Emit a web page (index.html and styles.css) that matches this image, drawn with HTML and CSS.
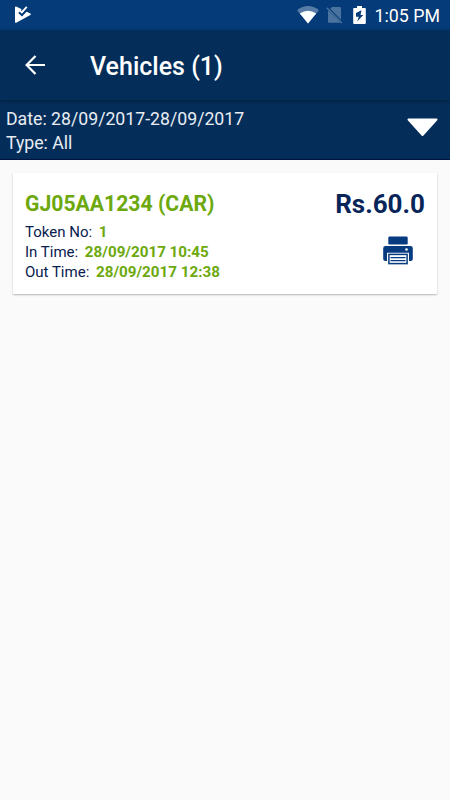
FILE: index.html
```html
<!DOCTYPE html>
<html lang="en">
<head>
    <meta charset="UTF-8">
    <meta name="viewport" content="width=device-width, initial-scale=1.0">
    <title>Vehicles</title>
    <link rel="stylesheet" href="styles.css">
</head>
<body>
    <div class="status-bar">
        <svg class="play-icon" width="17" height="17" viewBox="0 0 17 17">
            <path d="M1.8 1.2 L16 8.2 L1.8 16 Z" fill="#fff" stroke="#fff" stroke-width="1.6" stroke-linejoin="round"/>
            <path d="M5 6.2 L8 9 L14 2.4" fill="none" stroke="#043b78" stroke-width="2.2"/>
            <path d="M7.6 4.9 L10.5 1.5" fill="none" stroke="#043b78" stroke-width="2"/>
            <path d="M7.2 6.8 L12.8 0.9" fill="none" stroke="#fff" stroke-width="1.8"/>
        </svg>
        <div class="status-icons">
            <svg class="wifi-icon" width="22" height="18" viewBox="0 0 22 18">
                <path d="M0 4.2 Q11 -4 22 4.2 L11 17.6 Z" fill="#567ca6"/>
                <path d="M2.8 7.6 Q11 2 19.2 7.6 L11 17.6 Z" fill="#fff"/>
            </svg>
            <svg class="sim-icon" width="17" height="18" viewBox="0 0 17 18">
                <path d="M6 1 H14 Q15 1 15 2 V13.8 L4.2 2.8 Z" fill="#4b739f"/>
                <path d="M2 4.2 L14.5 16.7 H3 Q2 16.7 2 15.7 Z" fill="#4b739f"/>
                <path d="M0.8 1.8 L15.8 17" stroke="#4b739f" stroke-width="1.4"/>
            </svg>
            <svg class="battery-icon" width="13" height="18" viewBox="0 0 13 18">
                <path d="M4 0 H9 V2 H12 Q12.8 2 12.8 3 V17 Q12.8 18 12 18 H1 Q0.2 18 0.2 17 V3 Q0.2 2 1 2 H4 Z" fill="#fff"/>
                <path d="M8.5 4.3 L3 7 V10.8 H5.8 L4.2 15.5 L10.3 9 H7.5 Z" fill="#043b78"/>
            </svg>
            <span class="clock">1:05 PM</span>
        </div>
    </div>

    <div class="toolbar">
        <svg class="back-icon" width="20" height="20" viewBox="0 0 20 20">
            <path d="M20 10 H2 M10.5 0.9 L1.6 10 L10.5 19.1" fill="none" stroke="#fff" stroke-width="2.2"/>
        </svg>
        <h1>Vehicles (1)</h1>
    </div>

    <div class="filter-bar">
        <div class="filter-text">
            <p>Date: 28/09/2017-28/09/2017</p>
            <p>Type: All</p>
        </div>
        <svg class="dropdown-icon" width="32" height="19" viewBox="0 0 32 19">
            <path d="M2.5 1.5 H30.5 L16.5 17 Z" fill="#fff" stroke="#fff" stroke-width="2" stroke-linejoin="round"/>
        </svg>
    </div>

    <div class="vehicle-card">
        <div class="vehicle-info">
            <h2>GJ05AA1234 (CAR)</h2>
            <p>Token No: <b>1</b></p>
            <p>In Time: <b>28/09/2017 10:45</b></p>
            <p>Out Time: <b>28/09/2017 12:38</b></p>
        </div>
        <div class="vehicle-side">
            <span class="amount">Rs.60.0</span>
            <svg class="print-icon" width="30" height="29" viewBox="0 0 30 29">
                <rect x="5.3" y="0.5" width="19.4" height="8" rx="1.3" fill="#063b80"/>
                <path d="M2.5 10 H27.5 Q29.8 10 29.8 12.3 V23 Q29.8 25 27.5 25 H26 V16.8 H4 V25 H2.5 Q0.2 25 0.2 23 V12.3 Q0.2 10 2.5 10 Z" fill="#063b80"/>
                <circle cx="23.5" cy="13.5" r="1.3" fill="#fff"/>
                <rect x="5.9" y="18.4" width="18.2" height="9.2" fill="#fff" stroke="#063b80" stroke-width="1.5"/>
                <path d="M7.5 21.6 H22.5 M7.5 24.6 H22.5" stroke="#063b80" stroke-width="1.1"/>
            </svg>
        </div>
    </div>
</body>
</html>
```

FILE: styles.css
```css
* {
    margin: 0;
    padding: 0;
    box-sizing: border-box;
}

body {
    font-family: Roboto, "Liberation Sans", sans-serif;
    background: #fafafa;
    min-height: 100vh;
}

.status-bar {
    display: flex;
    justify-content: space-between;
    height: 30px;
    padding: 6px 10px 0 14px;
    background: #043b78;
    color: #fff;
}

.status-icons {
    display: flex;
}

.sim-icon {
    margin-left: 7px;
}

.battery-icon {
    margin-left: 10px;
}

.clock {
    margin-left: 9px;
    font-size: 17.8px;
    line-height: 20px;
}

.toolbar {
    position: relative;
    display: flex;
    align-items: center;
    height: 70px;
    padding-left: 25px;
    background: #042d5a;
    color: #fff;
    box-shadow: 0 1px 4px rgba(0, 0, 0, 0.35);
}

.toolbar h1 {
    margin: 4px 0 0 45px;
    font-size: 25px;
    font-weight: 500;
    line-height: 30px;
}

.filter-bar {
    display: flex;
    justify-content: space-between;
    height: 60px;
    padding: 7px 12px 0 6px;
    background: #042d5a;
    border-bottom: 1px solid #00133e;
    color: #e9edf3;
}

.filter-text {
    font-size: 17.7px;
    line-height: 24px;
}

.dropdown-icon {
    margin-top: 11px;
}

.vehicle-card {
    display: flex;
    justify-content: space-between;
    height: 121px;
    margin: 13px 13px 0;
    padding: 16px 12px 0;
    background: #fff;
    border-radius: 1px;
    box-shadow: 0 1px 2px rgba(0, 0, 0, 0.28);
}

.vehicle-info h2 {
    margin-bottom: 2.5px;
    color: #6da90e;
    font-size: 21.2px;
    font-weight: 700;
    line-height: 30px;
}

.vehicle-info p {
    color: #08204f;
    font-size: 15px;
    line-height: 20.4px;
}

.vehicle-info b {
    margin-left: 3px;
    color: #6da90e;
    font-size: 15.2px;
}

.vehicle-side {
    display: flex;
    flex-direction: column;
    align-items: flex-end;
}

.amount {
    color: #08255a;
    font-size: 26px;
    font-weight: 700;
    line-height: 30px;
}

.print-icon {
    margin: 17px 12px 0 0;
}
```
